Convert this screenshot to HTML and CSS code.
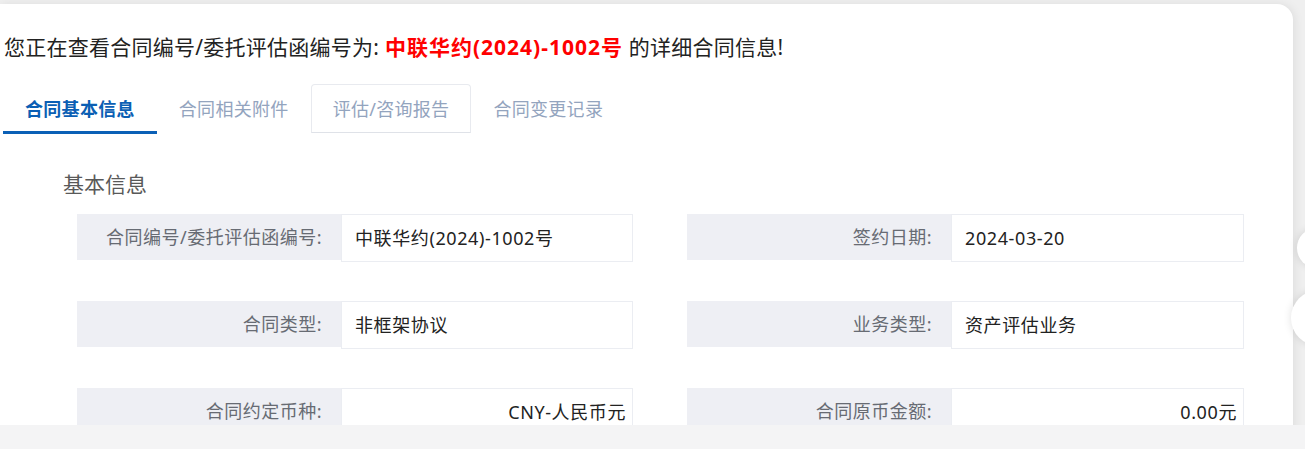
FILE: index.html
```html
<!DOCTYPE html>
<html lang="zh-CN">
<head>
<meta charset="utf-8">
<title>合同详细信息</title>
<link rel="stylesheet" href="styles.css">
</head>
<body>
<div class="card">
  <div class="headline">您正在查看合同编号/委托评估函编号为: <span class="code">中联华约(2024)-1002号</span> 的详细合同信息!</div>
  <div class="tabs">
    <div class="tab active">合同基本信息</div>
    <div class="tab">合同相关附件</div>
    <div class="tab boxed">评估/咨询报告</div>
    <div class="tab">合同变更记录</div>
  </div>
  <div class="section-title">基本信息</div>
  <div class="form">
    <div class="field">
      <div class="label">合同编号/委托评估函编号:</div>
      <div class="value">中联华约(2024)-1002号</div>
    </div>
    <div class="field">
      <div class="label">签约日期:</div>
      <div class="value">2024-03-20</div>
    </div>
    <div class="field">
      <div class="label">合同类型:</div>
      <div class="value">非框架协议</div>
    </div>
    <div class="field">
      <div class="label">业务类型:</div>
      <div class="value">资产评估业务</div>
    </div>
    <div class="field">
      <div class="label">合同约定币种:</div>
      <div class="value right">CNY-人民币元</div>
    </div>
    <div class="field">
      <div class="label">合同原币金额:</div>
      <div class="value right">0.00元</div>
    </div>
  </div>
</div>
<div class="float-btn small"></div>
<div class="float-btn big"></div>
<div class="footer"></div>
</body>
</html>
```
FILE: styles.css
```css
html, body {
  margin: 0;
  padding: 0;
  height: 449px;
  overflow: hidden;
}
body {
  background: #efefef;
  font-family: "Noto Sans", "Noto Sans CJK SC", sans-serif;
}
.card {
  margin-top: 4px;
  width: 1293px;
  height: 520px;
  background: #fff;
  border-top-right-radius: 16px;
  box-shadow: 2px 0 10px rgba(0, 0, 0, 0.07);
}
.headline {
  padding: 28px 0 0 4px;
  font-size: 21px;
  line-height: 30px;
  color: #222;
  letter-spacing: 0.25px;
}
.code {
  color: #ff0000;
  font-weight: bold;
  letter-spacing: 1px;
}
.tabs {
  display: flex;
  margin-top: 22px;
  padding-left: 3px;
  height: 50px;
}
.tab {
  padding: 3px 22px 0;
  font-size: 18px;
  line-height: 44px;
  height: 50px;
  box-sizing: border-box;
  color: #93a4be;
  letter-spacing: 0.3px;
  border-bottom: 3px solid transparent;
}
.tab.active {
  color: #0b5fb4;
  font-weight: bold;
  border-bottom-color: #0b60b6;
}
.tab.boxed {
  padding: 2px 21px 1px;
  line-height: 44px;
  height: 49px;
  border: 1px solid #e8eaef;
  border-bottom-color: #dfe2e8;
  border-radius: 4px 4px 0 0;
}
.section-title {
  margin: 36px 0 0 63px;
  font-size: 21px;
  line-height: 28px;
  color: #595959;
}
.form {
  display: grid;
  grid-template-columns: 556px 557px;
  column-gap: 54px;
  row-gap: 39px;
  margin: 16px 0 0 77px;
}
.field {
  display: flex;
  height: 48px;
}
.label {
  width: 264px;
  height: 46px;
  flex: none;
  box-sizing: border-box;
  padding-right: 19px;
  background: #eeeff4;
  text-align: right;
  font-size: 18px;
  line-height: 46px;
  color: #676b73;
  letter-spacing: 0.5px;
  white-space: nowrap;
}
.value {
  flex: 1;
  height: 48px;
  box-sizing: border-box;
  border: 1px solid #ebedf2;
  padding: 0 6px 0 13px;
  font-size: 18px;
  line-height: 46px;
  color: #222;
  letter-spacing: 0.6px;
}
.value.right {
  text-align: right;
}
.float-btn {
  position: fixed;
  background: #fff;
  border-radius: 50%;
  box-shadow: 0 0 8px rgba(0, 0, 0, 0.12);
}
.float-btn.small {
  left: 1297px;
  top: 228px;
  width: 40px;
  height: 40px;
}
.float-btn.big {
  left: 1291px;
  top: 290px;
  width: 56px;
  height: 56px;
}
.footer {
  position: fixed;
  left: 0;
  right: 0;
  bottom: 0;
  height: 24px;
  background: #f4f4f5;
}
```
